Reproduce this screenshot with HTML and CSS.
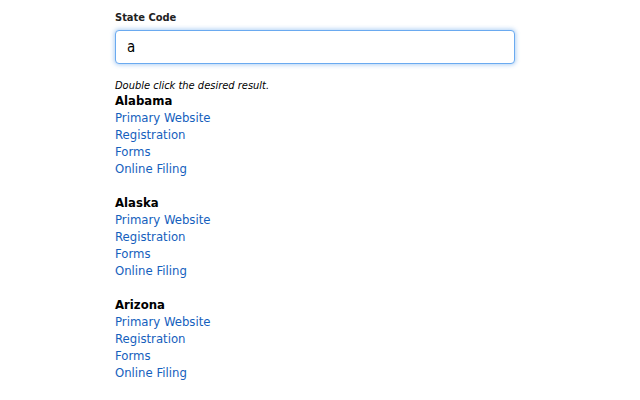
FILE: index.html
```html
<!DOCTYPE html>
<html>
<head>
    <title>State Lookup</title>
    <link rel="stylesheet" href="styles.css">
</head>
<body>
    <div class="container">
        <div class="form-group">
            <label for="stateCode">State Code</label>
            <input type="text" id="stateCode" value="a" autofocus>
        </div>
        <p class="hint">Double click the desired result.</p>
        <div class="results">
            <div class="state">
                <h2>Alabama</h2>
                <a href="#">Primary Website</a>
                <a href="#">Registration</a>
                <a href="#">Forms</a>
                <a href="#">Online Filing</a>
            </div>
            <div class="state">
                <h2>Alaska</h2>
                <a href="#">Primary Website</a>
                <a href="#">Registration</a>
                <a href="#">Forms</a>
                <a href="#">Online Filing</a>
            </div>
            <div class="state">
                <h2>Arizona</h2>
                <a href="#">Primary Website</a>
                <a href="#">Registration</a>
                <a href="#">Forms</a>
                <a href="#">Online Filing</a>
            </div>
        </div>
    </div>
</body>
</html>
```

FILE: styles.css
```css
body {
    font-family: 'DejaVu Sans Condensed', 'DejaVu Sans', sans-serif;
    color: #000000;
    margin: 0;
    background-color: #ffffff;
}

.container {
    width: 400px;
    margin-left: 115px;
    padding-top: 11px;
}

.form-group {
    display: flex;
    flex-direction: column;
}

label {
    font-size: 11px;
    font-weight: bold;
    line-height: 14px;
    margin-bottom: 5px;
    color: #222222;
}

input[type="text"] {
    height: 34px;
    box-sizing: border-box;
    padding: 0 11px;
    border: 1px solid #6aaaf0;
    border-radius: 4px;
    font-family: 'DejaVu Sans Condensed', 'DejaVu Sans', sans-serif;
    font-size: 15px;
    color: #000000;
    outline: none;
    box-shadow: 0 0 4px 1px rgba(80, 150, 230, 0.45);
}

.hint {
    font-size: 11px;
    font-style: italic;
    line-height: 13px;
    margin: 15px 0 0 0;
}

.state {
    display: flex;
    flex-direction: column;
    align-items: flex-start;
    margin-bottom: 17px;
}

h2 {
    font-size: 13px;
    font-weight: bold;
    line-height: 17px;
    margin: 0;
}

a {
    font-size: 13px;
    line-height: 17px;
    color: #1560bd;
    text-decoration: none;
}
```
